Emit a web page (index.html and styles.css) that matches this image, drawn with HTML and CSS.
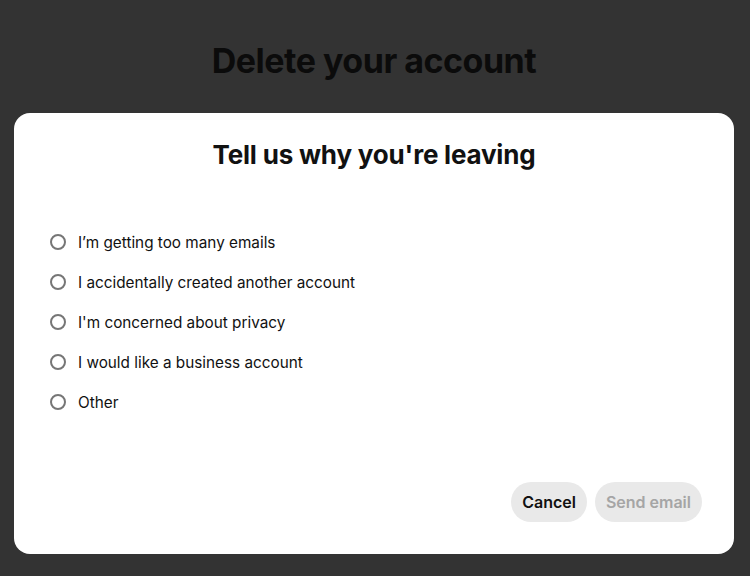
FILE: index.html
```html
<!DOCTYPE html>
<html lang="en">
<head>
<meta charset="utf-8">
<title>Delete your account</title>
<link rel="stylesheet" href="styles.css">
</head>
<body>
<div class="page">
  <h1 class="page-title">Delete your account</h1>
  <div class="modal" role="dialog">
    <h2 class="modal-title">Tell us why you're leaving</h2>
    <ul class="options">
      <li class="option"><span class="radio"></span><span class="label">I’m getting too many emails</span></li>
      <li class="option"><span class="radio"></span><span class="label">I accidentally created another account</span></li>
      <li class="option"><span class="radio"></span><span class="label">I'm concerned about privacy</span></li>
      <li class="option"><span class="radio"></span><span class="label">I would like a business account</span></li>
      <li class="option"><span class="radio"></span><span class="label">Other</span></li>
    </ul>
    <div class="footer">
      <button class="btn btn-cancel">Cancel</button>
      <button class="btn btn-disabled" disabled>Send email</button>
    </div>
  </div>
</div>
</body>
</html>
```

FILE: styles.css
```css
* { box-sizing: border-box; }
html, body { margin: 0; padding: 0; }
body {
  background: #333333;
  font-family: Inter, "Liberation Sans", sans-serif;
  color: #111111;
  width: 750px;
  height: 576px;
  overflow: hidden;
}
.page {
  display: flex;
  flex-direction: column;
  align-items: center;
  padding-top: 38px;
}
.page-title {
  margin: 0;
  font-size: 34px;
  line-height: 46px;
  font-weight: 700;
  color: #0b0b0b;
  letter-spacing: -0.5px;
  margin-left: -2px;
}
.modal {
  margin-top: 29px;
  align-self: flex-start;
  margin-left: 14px;
  width: 720px;
  height: 441px;
  background: #ffffff;
  border-radius: 16px;
  display: flex;
  flex-direction: column;
  padding: 24px 32px 32px 32px;
}
.modal-title {
  margin: 0;
  text-align: center;
  font-size: 26px;
  line-height: 36px;
  font-weight: 700;
  color: #111111;
  letter-spacing: -0.2px;
}
.options {
  list-style: none;
  margin: 57px 0 0 0;
  padding: 0 0 0 4px;
  display: flex;
  flex-direction: column;
  gap: 16px;
}
.option {
  display: flex;
  align-items: center;
  height: 24px;
  gap: 12px;
}
.radio {
  width: 16px;
  height: 16px;
  border: 2px solid #767676;
  border-radius: 50%;
  flex: none;
}
.label {
  font-size: 15.3px;
  color: #111111;
}
.footer {
  margin-top: auto;
  display: flex;
  justify-content: flex-end;
  gap: 8px;
}
.btn {
  height: 40px;
  border: none;
  border-radius: 20px;
  padding: 0 11px;
  font-family: inherit;
  font-size: 16px;
  font-weight: 600;
  background: #e9e9e9;
}
.btn-cancel { color: #111111; }
.btn-disabled { color: #a5a5a5; }
```
